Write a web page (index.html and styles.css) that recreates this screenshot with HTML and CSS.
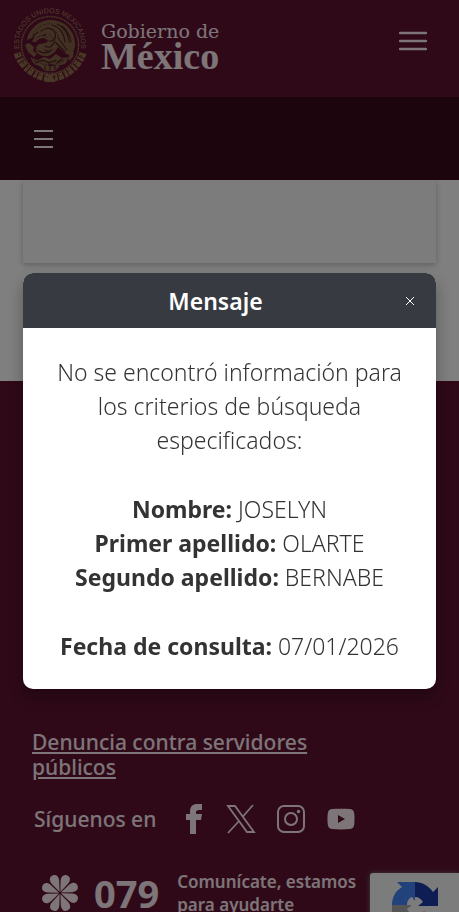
FILE: index.html
```html
<!DOCTYPE html>
<html lang="es">
<head>
  <meta charset="UTF-8">
  <meta name="viewport" content="width=device-width, initial-scale=1.0">
  <title>Gobierno de México</title>
  <link rel="stylesheet" href="styles.css">
</head>
<body>
  <header class="header">
    <a class="brand" href="#">
      <svg class="seal" viewBox="0 0 76 76" aria-hidden="true">
        <defs>
          <path id="sealArc" d="M9 48A31 31 0 1 1 67 48"/>
        </defs>
        <text class="seal-text"><textPath href="#sealArc" startOffset="50%" text-anchor="middle">ESTADOS UNIDOS MEXICANOS</textPath></text>
        <circle cx="38" cy="38" r="28.500" fill="none" stroke="#8d6a4c" stroke-width="1.500" stroke-dasharray="2 .6"/>
        <!-- wreath -->
        <g fill="none" stroke="#94704e">
          <path d="M5 46C9 58 21 70 37 71S67 59 71 46" stroke-width="7" stroke-dasharray="5 1.500 3 1"/>
          <path d="M6 46C10 58 22 69 37 70S66 58 70 46" stroke="#5f2a2c" stroke-width="1" stroke-dasharray="3 2"/>
          <path d="M33 74h10M34 67l8 6M42 67l-8 6" stroke-width="2"/>
        </g>
        <!-- eagle -->
        <g fill="#856345">
          <path d="M15 32C18 21 27 14 37 13C52 12 63 24 63 37C63 45 58 49 54 47L46 40C43 46 38 50 32 49C25 48 22 43 25 39C28 35 33 38 36 34C33 29 27 31 24 35L20 35L23 29C18 31 16 34 15 32Z"/>
          <path d="M44 47l6 4 8-1-5 7-8 2-7-2-6 4-10-4-4-7 8 3 6-3 6 2z"/>
          <path d="M13 38l4-2 5 4-1 4 4 3-3 3-6-5zM28 59h20l-5 5H33zM57 47l5-3-1 6-4 4z"/>
        </g>
        <g fill="none" stroke="#4d2028" stroke-linecap="round">
          <path stroke-width="1.200" d="M29 24c5-4 12-3 14 2s-2 9-6 8M40 18c7 2 12 8 13 17M45 17c7 3 11 9 12 18M50 19c5 4 8 9 9 16M33 39c4 3 8 0 9-4M27 44c4 3 9 2 12-1M46 31l9 12M43 35l10 10M26 25l-5 4M31 29l3-2M33 43l4 2M23 56l8-3 6 3 7-3M33 59v4M38 58v5M43 59v4M50 52l-5 4"/>
          <path stroke-width=".8" stroke-dasharray="1 1.800" d="M21 27c5-8 12-11 19-10M25 31c5-4 9-3 11 0M34 21c8-1 12 5 13 11M37 27c3 4 8 10 14 15M24 41c4 6 12 7 17 1M18 50c8 6 28 7 39 1M23 54c9 5 20 5 29 0"/>
        </g>
      </svg>
      <span class="brand-name">
        <span class="brand-small">Gobierno de</span>
        <span class="brand-big">México</span>
      </span>
    </a>
    <button class="icon-button" type="button" aria-label="Menú principal">
      <svg width="28" height="20" viewBox="0 0 28 20" aria-hidden="true">
        <path d="M1 2h26M1 10h26M1 18h26" stroke="currentColor" stroke-width="2.500" stroke-linecap="round"/>
      </svg>
    </button>
  </header>

  <nav class="subnav">
    <button class="icon-button" type="button" aria-label="Abrir menú">
      <svg width="19" height="20" viewBox="0 0 19 20" aria-hidden="true">
        <path d="M0 2h19M0 10h19M0 18h19" stroke="currentColor" stroke-width="2"/>
      </svg>
    </button>
  </nav>

  <main class="content">
    <div class="card"></div>
  </main>

  <footer class="footer">
    <a class="report-link" href="#">Denuncia contra servidores públicos</a>

    <div class="social">
      <span class="social-label">Síguenos en</span>
      <a class="social-link" href="#" aria-label="Facebook">
        <svg width="30" height="32" viewBox="0 0 30 32" aria-hidden="true">
          <path fill="currentColor" d="M14 31V17H10v-6h4V9c0-6 3-8 7-8h5v6h-3c-2 0-3 1-3 2v2h6l-1 6h-5v14z"/>
        </svg>
      </a>
      <a class="social-link" href="#" aria-label="X">
        <svg width="30" height="32" viewBox="0 0 30 32" aria-hidden="true">
          <path fill="none" stroke="currentColor" stroke-width="1.800" d="M2 3h7l19 26h-7zM27 2L16.500 14M13 18L2 30"/>
        </svg>
      </a>
      <a class="social-link" href="#" aria-label="Instagram">
        <svg width="30" height="32" viewBox="0 0 30 32" aria-hidden="true">
          <g fill="none" stroke="currentColor" stroke-width="2">
            <rect x="2" y="3" width="26" height="26" rx="6"/>
            <circle cx="15" cy="16" r="6"/>
          </g>
          <circle cx="22.500" cy="8.500" r="1.700" fill="currentColor"/>
        </svg>
      </a>
      <a class="social-link" href="#" aria-label="YouTube">
        <svg width="30" height="32" viewBox="0 0 30 32" aria-hidden="true">
          <path fill="currentColor" fill-rule="evenodd" d="M6 6C12 5.500 18 5.500 24 6C27 6.500 28 8 28.300 11C28.600 14 28.600 18 28.300 21C28 24 27 25.500 24 26C18 26.500 12 26.500 6 26C3 25.500 2 24 1.700 21C1.400 18 1.400 14 1.700 11C2 8 3 6.500 6 6ZM12 12v8l7-4z"/>
        </svg>
      </a>
    </div>

    <div class="help">
      <svg class="help-flower" viewBox="-19 -19 38 38" aria-hidden="true">
        <defs>
          <path id="petal" d="M0 -1L-4 -11.500C-5.500 -16 -3.500 -19 0 -19S5.500 -16 4 -11.500Z"/>
        </defs>
        <g fill="currentColor">
          <use href="#petal" transform="rotate(22)"/>
          <use href="#petal" transform="rotate(67)"/>
          <use href="#petal" transform="rotate(112)"/>
          <use href="#petal" transform="rotate(157)"/>
          <use href="#petal" transform="rotate(202)"/>
          <use href="#petal" transform="rotate(247)"/>
          <use href="#petal" transform="rotate(292)"/>
          <use href="#petal" transform="rotate(337)"/>
        </g>
      </svg>
      <span class="help-number">079</span>
      <p class="help-text">Comunícate, estamos para ayudarte</p>
    </div>
  </footer>

  <div class="captcha-badge">
    <svg width="48" height="48" viewBox="0 0 48 48" aria-hidden="true">
      <path fill="#1c3aa9" d="M47 23V6l-5 5C38 5 31 1 24 1v15c4 0 6 2 8 5l-5 4h20z"/>
      <path fill="#4285f4" d="M24 1H6l5 5C4 10 1 17 1 24h15c0-4 2-7 5-8l3 4z"/>
      <path fill="#ababab" d="M1 24v18l5-5c4 6 11 10 18 10 7 0 13-3 18-9l-9-8c-6 6-14 4-17-2l5-4z"/>
    </svg>
  </div>

  <div class="overlay">
    <div class="modal" role="dialog" aria-modal="true" aria-labelledby="modalTitle">
      <div class="modal-header">
        <h2 class="modal-title" id="modalTitle">Mensaje</h2>
        <button class="modal-close" type="button" aria-label="Cerrar">
          <svg width="10" height="10" viewBox="0 0 10 10" aria-hidden="true">
            <path d="M1 1l8 8M9 1l-8 8" stroke="currentColor" stroke-width="1"/>
          </svg>
        </button>
      </div>
      <div class="modal-body">
        <p>No se encontró información para los criterios de búsqueda especificados:</p>
        <p>
          <strong>Nombre:</strong> JOSELYN<br>
          <strong>Primer apellido:</strong> OLARTE<br>
          <strong>Segundo apellido:</strong> BERNABE
        </p>
        <p><strong>Fecha de consulta:</strong> 07/01/2026</p>
      </div>
    </div>
  </div>
</body>
</html>
```
FILE: styles.css
```css
* {
  box-sizing: border-box;
}

body {
  margin: 0;
  height: 100vh;
  overflow: hidden;
  font-family: "Noto Sans", "Open Sans", sans-serif;
  background: #fff;
  color: #333;
}

p, h2 {
  margin: 0;
}

button {
  padding: 0;
  border: none;
  background: none;
  cursor: pointer;
}

svg {
  display: block;
}

.header {
  display: flex;
  align-items: center;
  justify-content: space-between;
  height: 97px;
  padding: 0 32px 8px 12px;
  background: #5e1230;
}

.brand {
  display: flex;
  align-items: center;
  gap: 13px;
  color: #fbeaf1;
  text-decoration: none;
}

.seal {
  width: 76px;
  height: 76px;
}

.seal-text {
  font-family: "Liberation Sans", sans-serif;
  font-size: 7px;
  fill: #a57f5f;
}

.brand-name {
  display: flex;
  flex-direction: column;
}

.brand-small {
  font-family: "DejaVu Serif", serif;
  font-size: 19px;
  line-height: 22px;
}

.brand-big {
  font-family: "Liberation Serif", serif;
  font-size: 38px;
  font-weight: bold;
  line-height: 28px;
}

.icon-button {
  color: #fbeaf1;
}

.header .icon-button {
  margin-bottom: 8px;
}

.subnav {
  display: flex;
  align-items: center;
  height: 83px;
  padding: 0 34px;
  background: #3a0a1c;
}

.content {
  height: 201px;
  padding: 0 23px;
}

.card {
  height: 83px;
  background: #f9f9f9;
  box-shadow: 0 2px 6px rgba(0, 0, 0, 0.25);
  clip-path: inset(0 -10px -10px -10px);
}

.footer {
  padding: 349px 32px 40px;
  background: #5e1230;
  color: #fbeaf1;
}

.report-link {
  display: block;
  max-width: 300px;
  color: inherit;
  font-size: 21px;
  font-weight: 500;
  line-height: 25px;
}

.social {
  display: flex;
  align-items: center;
  gap: 20px;
  margin: 23px 0 0 2px;
}

.social-label {
  font-size: 21px;
  font-weight: 500;
  line-height: 27px;
}

.social-link {
  color: inherit;
}

.help {
  display: flex;
  align-items: center;
  margin-top: 35px;
  padding-left: 9px;
}

.help-flower {
  width: 38px;
  height: 38px;
}

.help-number {
  margin: 0 18px 0 15px;
  font-size: 38px;
  font-weight: bold;
  line-height: 44px;
}

.help-text {
  width: 190px;
  font-size: 17px;
  font-weight: 600;
  line-height: 23px;
}

/* recaptcha, partly outside the window */
.captcha-badge {
  position: fixed;
  right: 0;
  bottom: -39px;
  width: 89px;
  height: 78px;
  padding: 8px 21px;
  background: #f9f9f9;
  border-radius: 3px 0 0 3px;
  box-shadow: 0 0 5px gray;
}

.overlay {
  position: fixed;
  inset: 0;
  display: flex;
  align-items: center;
  padding: 50px 23px 0;
  background: rgba(0, 0, 0, 0.5);
}

.modal {
  width: 100%;
  overflow: hidden;
  background: #fff;
  border-radius: 10px;
  box-shadow: 0 8px 16px rgba(0, 0, 0, 0.3);
}

.modal-header {
  display: flex;
  align-items: center;
  height: 55px;
  padding: 0 12px;
  background: #373a41;
  color: #fff;
}

.modal-title {
  flex: 1;
  font-size: 23px;
  font-weight: 600;
  text-align: center;
}

.modal-close {
  display: flex;
  align-items: center;
  justify-content: center;
  width: 28px;
  height: 28px;
  color: #fff;
}

.modal-body {
  display: flex;
  flex-direction: column;
  gap: 35px;
  padding: 27px 24px 26px;
  font-size: 23px;
  font-weight: 300;
  line-height: 34px;
  text-align: center;
}

.modal-body strong {
  font-weight: 700;
}
```
